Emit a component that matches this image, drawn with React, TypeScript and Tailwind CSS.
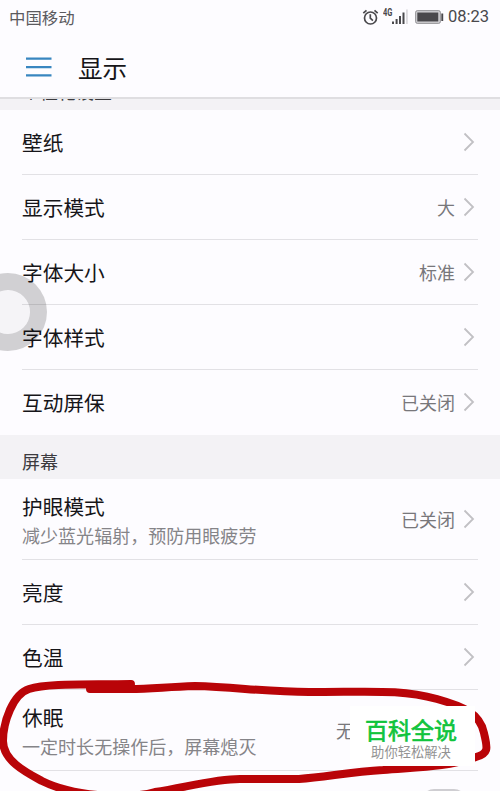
import type { ReactNode } from "react";

const Chevron = () => (
  <svg viewBox="0 0 12 20" className="h-5 w-3 shrink-0" fill="none" stroke="#c1c0c4" strokeWidth="1.8">
    <path d="M1.5 1.5 10 10 1.5 18.5" />
  </svg>
);

const AlarmIcon = () => (
  <svg viewBox="0 0 17 17" className="h-[17px] w-[17px]" fill="none" stroke="#49484c" strokeWidth="1.7">
    <circle cx="8.5" cy="9" r="6" />
    <path d="M8.3 5.2v4l2.6 2.5M1.3 4.2l3.2-2.9M15.7 4.2l-3.2-2.9" />
  </svg>
);

const SignalIcon = () => (
  <svg viewBox="0 0 17 16" className="h-4 w-[17px]" fill="#49484c">
    <path d="M0 12.5h2V15H0zM3.6 10h2v5h-2zM7 7h2v8H7zM10.5 3.5h2V15h-2z" />
    <path d="M14.2.5h1.5V15h-1.5z" fill="#d4d3d7" />
  </svg>
);

const BatteryIcon = () => (
  <svg viewBox="0 0 29 15" className="h-[15px] w-[29px]">
    <rect x="0.7" y="0.7" width="24.6" height="12.6" rx="1.5" fill="#d6d5d9" stroke="#8b8a8e" />
    <path d="M2.3 2.5h21v9h-21zM26.3 3.5h1.9V11h-1.9z" fill="#49484c" />
  </svg>
);

type RowProps = {
  label: string;
  description?: string;
  value?: ReactNode;
};

const Row = ({ label, description, value }: RowProps) => (
  <div
    className={
      description
        ? "ml-[22px] mr-[22px] flex h-[81px] items-center border-b border-[#e2e1e5]"
        : "ml-[22px] mr-[22px] flex h-[65px] items-center border-b border-[#e2e1e5] last:border-transparent"
    }
  >
    <div className={description ? "flex-1 whitespace-nowrap pt-[3px]" : "flex-1 whitespace-nowrap"}>
      <div className="text-[20.7px] leading-[29px] text-[#161519]">{label}</div>
      {description && <div className="text-[18.05px] leading-[29px] text-[#858488]">{description}</div>}
    </div>
    <div className="mr-[3px] flex items-center gap-2">
      <span className="text-[18px] leading-6 text-[#78777b]">{value}</span>
      <Chevron />
    </div>
  </div>
);

const personal = [
  { label: "壁纸" },
  { label: "显示模式", value: "大" },
  { label: "字体大小", value: "标准" },
  { label: "字体样式" },
  { label: "互动屏保", value: "已关闭" },
];

const screen = [
  { label: "护眼模式", description: "减少蓝光辐射，预防用眼疲劳", value: "已关闭" },
  { label: "亮度" },
  { label: "色温" },
  { label: "休眠", description: "一定时长无操作后，屏幕熄灭", value: <span className="mr-[101px]">无</span> },
];

export default function App() {
  return (
    <main className="relative h-[791px] w-[500px] overflow-hidden bg-[#fdfcff] font-['Noto_Sans_CJK_SC',sans-serif]">
      <header className="flex h-[97px] flex-col">
        <div className="flex h-[34px] items-center pl-[9px] pr-[11px] text-[#49484c]">
          <span className="flex-1 text-[16.4px] leading-6 text-[#5b5a5e]">中国移动</span>
          <AlarmIcon />
          <span className="mb-2 ml-[4px] origin-left scale-x-75 font-[Roboto] text-[10px] font-bold leading-3">4G</span>
          <span className="-ml-[4px]">
            <SignalIcon />
          </span>
          <span className="ml-[6px]">
            <BatteryIcon />
          </span>
          <span className="ml-[4px] font-[Roboto] text-[16.5px] leading-6">08:23</span>
        </div>
        <div className="flex h-[63px] items-center pl-[26px] pt-[2px]">
          <svg viewBox="0 0 26 20" className="h-5 w-[26px]" fill="#3886c0">
            <path d="M0 .5h25.5v2.2H0zM0 9h25.5v2.2H0zM0 17.3h25.5v2.2H0z" />
          </svg>
          <h1 className="ml-[26px] text-[24.6px] leading-8 text-[#161519]">显示</h1>
        </div>
      </header>

      <div className="flex h-[13px] items-end overflow-hidden border-t-2 border-[#dfdee1] bg-[#f3f2f5] pl-[22px]">
        <span className="mb-[10px] h-[18px] text-[18px] leading-[18px] text-[#3c3b3f]">个性化设置</span>
      </div>
      <section>
        {personal.map((item) => (
          <Row key={item.label} {...item} />
        ))}
      </section>

      <h2 className="flex h-11 items-end bg-[#f3f2f5] pb-[5px] pl-[22px] text-[18px] leading-[26px] text-[#3c3b3f]">屏幕</h2>
      <section>
        {screen.map((item) => (
          <Row key={item.label} {...item} />
        ))}
      </section>

      {/* floating navigation dock */}
      <div className="absolute -left-[31px] top-[273px] h-[78px] w-[78px] rounded-full border-[17px] border-black/15 bg-black/[0.03]" />

      {/* top edge of the next switch */}
      <div className="absolute left-[422px] top-[789px] h-6 w-11 rounded-full bg-[#cfced2]" />

      <svg
        viewBox="0 0 500 791"
        className="absolute inset-0 h-full w-full"
        fill="none"
        stroke="#b90408"
        strokeWidth="8"
        strokeLinecap="round"
        strokeLinejoin="round"
      >
        <path d="M131 684C92 685 48 683 29 689C13 694 3 722 3 741C3 761 27 773 42 781C72 796 126 800 155 792C187 787 215 779 240 779L299 779C326 777 350 772 383 770C419 767 448 767 476 757C490 753 487 747 484 733C480 713 462 706 437 699C401 689 372 692 309 692C267 692 235 687 195 686C165 687 151 689 130 689L90 689" />
      </svg>

      <div className="absolute left-[350px] top-[706px] flex h-[60px] w-[125px] flex-col items-center bg-white pr-[3px] pt-[9px]">
        <div className="text-[23px] leading-[29px] text-[#10c43c] [-webkit-text-stroke:0.7px_#10c43c]">百科全说</div>
        <div className="pt-px text-[13.3px] leading-[14px] text-[#929292]">助你轻松解决</div>
      </div>
    </main>
  );
}
